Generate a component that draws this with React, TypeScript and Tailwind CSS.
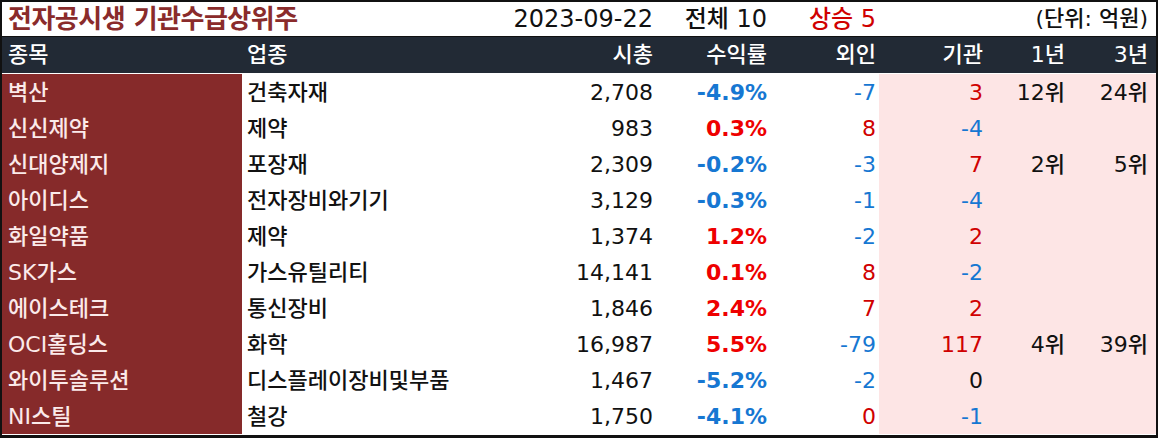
const rows = [
  { name: "벽산", sector: "건축자재", cap: "2,708", rate: "-4.9%", foreign: "-7", inst: "3", y1: "12위", y3: "24위" },
  { name: "신신제약", sector: "제약", cap: "983", rate: "0.3%", foreign: "8", inst: "-4", y1: "", y3: "" },
  { name: "신대양제지", sector: "포장재", cap: "2,309", rate: "-0.2%", foreign: "-3", inst: "7", y1: "2위", y3: "5위" },
  { name: "아이디스", sector: "전자장비와기기", cap: "3,129", rate: "-0.3%", foreign: "-1", inst: "-4", y1: "", y3: "" },
  { name: "화일약품", sector: "제약", cap: "1,374", rate: "1.2%", foreign: "-2", inst: "2", y1: "", y3: "" },
  { name: "SK가스", sector: "가스유틸리티", cap: "14,141", rate: "0.1%", foreign: "8", inst: "-2", y1: "", y3: "" },
  { name: "에이스테크", sector: "통신장비", cap: "1,846", rate: "2.4%", foreign: "7", inst: "2", y1: "", y3: "" },
  { name: "OCI홀딩스", sector: "화학", cap: "16,987", rate: "5.5%", foreign: "-79", inst: "117", y1: "4위", y3: "39위" },
  { name: "와이투솔루션", sector: "디스플레이장비및부품", cap: "1,467", rate: "-5.2%", foreign: "-2", inst: "0", y1: "", y3: "" },
  { name: "NI스틸", sector: "철강", cap: "1,750", rate: "-4.1%", foreign: "0", inst: "-1", y1: "", y3: "" },
]

// 외인 0 is red in the source, 기관 0 is black
function tone(v: string, zero: string) {
  if (v === "0") return zero
  return v.startsWith("-") ? "text-[#1677d2]" : "text-[#d00000]"
}

const grid = "grid grid-cols-[240px_318px_98px_114px_107px_109px_82px_86px]"

export default function App() {
  return (
    <div
      className="w-[1158px] h-[438px] border-t-2 border-x-2 border-b-[3px] border-[#111] bg-white text-[22px] leading-none font-medium"
      style={{ fontFamily: '"DejaVu Sans", "Noto Sans CJK KR", sans-serif' }}
    >
      {/* title */}
      <div className={`${grid} h-[35px] items-center border-b border-[#111] text-[24px] text-[#111]`}>
        <div className="col-span-2 pl-[6px] text-[26px] font-bold text-[#8a2b2b] tracking-[-0.5px]">
          전자공시생 기관수급상위주
        </div>
        <div className="flex justify-end whitespace-nowrap pr-[5px]">2023-09-22</div>
        <div className="flex justify-end whitespace-nowrap pr-[5px]">전체 10</div>
        <div className="flex justify-end whitespace-nowrap pr-[3px] text-[#d00000]">상승 5</div>
        <div />
        <div />
        <div className="flex justify-end whitespace-nowrap pr-[8px] text-[22px]">(단위: 억원)</div>
      </div>

      {/* header */}
      <div className={`${grid} h-[36px] items-center bg-[#222a35] text-white`}>
        <div className="pl-[6px]">종목</div>
        <div className="pl-[5px]">업종</div>
        <div className="text-right pr-[5px]">시총</div>
        <div className="text-right pr-[5px]">수익률</div>
        <div className="text-right pr-[3px]">외인</div>
        <div className="text-right pr-[5px]">기관</div>
        <div className="text-right pr-[5px]">1년</div>
        <div className="text-right pr-[8px]">3년</div>
      </div>

      <div className="h-px bg-white" />

      {/* body */}
      <div>
        {rows.map((r) => (
          <div key={r.name} className={`${grid} h-[36px] text-[#111]`}>
            <div className="flex items-center pt-[2px] pl-[6px] bg-[#862a2a] text-[#fbeaea] whitespace-nowrap">{r.name}</div>
            <div className="flex items-center pt-[2px] pl-[5px] whitespace-nowrap">{r.sector}</div>
            <div className="flex items-center pt-[2px] justify-end pr-[5px]">{r.cap}</div>
            <div
              className={`flex items-center pt-[2px] justify-end pr-[5px] font-bold ${
                r.rate.startsWith("-") ? "text-[#1677d2]" : "text-[#ee0000]"
              }`}
            >
              {r.rate}
            </div>
            <div className={`flex items-center pt-[2px] justify-end pr-[3px] ${tone(r.foreign, "text-[#d00000]")}`}>
              {r.foreign}
            </div>
            <div className={`flex items-center pt-[2px] justify-end pr-[5px] bg-[#fde5e5] ${tone(r.inst, "text-[#111]")}`}>
              {r.inst}
            </div>
            <div className="flex items-center pt-[2px] justify-end pr-[5px] bg-[#fde5e5]">{r.y1}</div>
            <div className="flex items-center pt-[2px] justify-end pr-[8px] bg-[#fde5e5]">{r.y3}</div>
          </div>
        ))}
      </div>
    </div>
  )
}
